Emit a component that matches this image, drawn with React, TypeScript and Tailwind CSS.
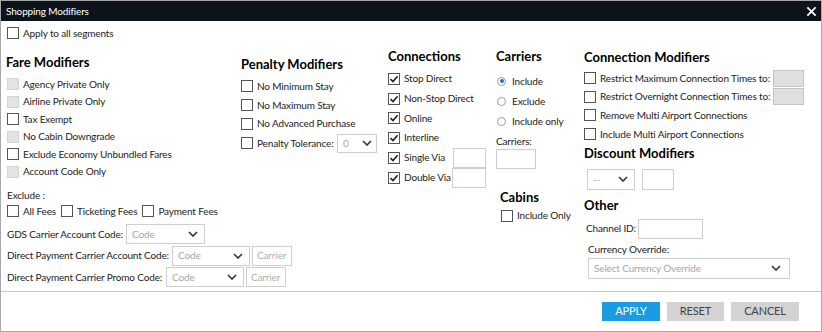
import React from "react";

const F = "font-['Lato','Liberation_Sans',sans-serif]";

function Box({ checked, disabled }: { checked?: boolean; disabled?: boolean }) {
  return (
    <span
      className={
        "relative inline-block w-[12px] h-[12px] shrink-0 border " +
        (disabled ? "border-[#d4d4d4] bg-[#e3e3e3]" : "border-[#555] bg-white")
      }
    >
      {checked && (
        <svg viewBox="0 0 12 12" className="absolute left-[-1px] top-[-1px] w-[12px] h-[12px]">
          <path d="M2.5 6.2 L5 8.6 L9.6 3.2" fill="none" stroke="#222" strokeWidth="1.6" />
        </svg>
      )}
    </span>
  );
}

function Check({
  label,
  checked,
  disabled,
  h = "h-[17.5px]",
}: {
  label: string;
  checked?: boolean;
  disabled?: boolean;
  h?: string;
}) {
  return (
    <div className={"flex items-center gap-[4px] whitespace-nowrap " + h}>
      <Box checked={checked} disabled={disabled} />
      <span>{label}</span>
    </div>
  );
}

function Radio({ label, on }: { label: string; on?: boolean }) {
  return (
    <div className="flex items-center gap-[6px] h-[20px] whitespace-nowrap">
      <span className="relative inline-block w-[9px] h-[9px] rounded-full border border-[#9a9a9a] bg-white">
        {on && <span className="absolute left-[1.5px] top-[1.5px] w-[4px] h-[4px] rounded-full bg-[#1f6fd0]" />}
      </span>
      <span>{label}</span>
    </div>
  );
}

function Chevron() {
  return (
    <svg viewBox="0 0 10 6" className="w-[10px] h-[6px] shrink-0">
      <path d="M1 1 L5 5 L9 1" fill="none" stroke="#333" strokeWidth="1.6" />
    </svg>
  );
}

function Select({ text, w, h = "h-[20px]", chevPad = "pr-[6px]" }: { text: string; w: string; h?: string; chevPad?: string }) {
  return (
    <div className={"flex items-center justify-between shrink-0 border border-[#cfcfcf] bg-white pl-[5px] text-[#a6a6a6] " + w + " " + h + " " + chevPad}>
      <span className="whitespace-nowrap">{text}</span>
      <Chevron />
    </div>
  );
}

function Input({ w, h = "h-[20px]", gray, ph }: { w: string; h?: string; gray?: boolean; ph?: string }) {
  return (
    <div
      className={
        "flex items-center shrink-0 border pl-[4px] text-[#b0b0b0] " +
        (gray ? "border-[#c4c4c4] bg-[#e0e0e0] " : "border-[#cfcfcf] bg-white ") +
        w +
        " " +
        h
      }
    >
      {ph}
    </div>
  );
}

function Heading({ children, cls = "" }: { children: React.ReactNode; cls?: string }) {
  return <div className={"h-[18px] flex items-center font-bold text-[13px] tracking-[0px] text-black whitespace-nowrap " + cls}>{children}</div>;
}

export default function App() {
  return (
    <div className={"w-[822px] h-[332px] bg-white text-[10px] tracking-[-0.15px] text-[#222] border border-[#a8a8a8] flex flex-col " + F}>
      <div className="h-[20px] shrink-0 bg-[#0c131b] flex items-center justify-between pl-[5px] pr-[4px] text-white">
        <span className="text-[10px]">Shopping Modifiers</span>
        <svg viewBox="0 0 12 12" className="w-[11px] h-[11px]">
          <path d="M1.5 1.5 L10.5 10.5 M10.5 1.5 L1.5 10.5" stroke="#fff" strokeWidth="2" />
        </svg>
      </div>

      <div className="flex h-[270px] shrink-0">
        {/* column 1 */}
        <div className="w-[240px] shrink-0 pl-[6px] flex flex-col">
          <div className="mt-[4px]">
            <Check label="Apply to all segments" h="h-[16px]" />
          </div>
          <Heading cls="mt-[13px] -ml-[1px]">Fare Modifiers</Heading>
          <div className="mt-[3.5px] flex flex-col">
            <Check label="Agency Private Only" disabled />
            <Check label="Airline Private Only" disabled />
            <Check label="Tax Exempt" />
            <Check label="No Cabin Downgrade" disabled />
            <Check label="Exclude Economy Unbundled Fares" />
            <Check label="Account Code Only" disabled />
          </div>
          <div className="mt-[6.5px] h-[16px] flex items-center">Exclude :</div>
          <div className="h-[16px] flex items-center gap-[5px]">
            <Check label="All Fees" h="h-[16px]" />
            <Check label="Ticketing Fees" h="h-[16px]" />
            <Check label="Payment Fees" h="h-[16px]" />
          </div>
          <div className="mt-[5px] h-[20px] flex items-center whitespace-nowrap">
            <span className="w-[119px] shrink-0">GDS Carrier Account Code:</span>
            <Select text="Code" w="w-[79px]" />
          </div>
          <div className="mt-[1.5px] h-[20px] flex items-center whitespace-nowrap">
            <span className="w-[165px] shrink-0">Direct Payment Carrier Account Code:</span>
            <Select text="Code" w="w-[78px]" />
            <div className="ml-[2px]">
              <Input w="w-[40px]" ph="Carrier" />
            </div>
          </div>
          <div className="mt-[1.5px] h-[20px] flex items-center whitespace-nowrap">
            <span className="w-[159px] shrink-0">Direct Payment Carrier Promo Code:</span>
            <Select text="Code" w="w-[78px]" />
            <div className="ml-[2px]">
              <Input w="w-[40px]" ph="Carrier" />
            </div>
          </div>
        </div>

        {/* column 2 */}
        <div className="w-[147px] shrink-0 flex flex-col pt-[35px]">
          <Heading>Penalty Modifiers</Heading>
          <div className="mt-[3px] flex flex-col">
            <Check label="No Minimum Stay" h="h-[18.7px]" />
            <Check label="No Maximum Stay" h="h-[18.7px]" />
            <Check label="No Advanced Purchase" h="h-[18.7px]" />
            <div className="h-[20px] flex items-center whitespace-nowrap">
              <div className="w-[96px] shrink-0">
                <Check label="Penalty Tolerance:" h="h-[20px]" />
              </div>
              <Select text="0" w="w-[40px]" h="h-[19px]" chevPad="pr-[4px]" />
            </div>
          </div>
        </div>

        {/* column 3 */}
        <div className="w-[108px] shrink-0 flex flex-col pt-[27px]">
          <Heading>Connections</Heading>
          <div className="mt-[3px] flex flex-col">
            <Check label="Stop Direct" checked h="h-[19.7px]" />
            <Check label="Non-Stop Direct" checked h="h-[19.7px]" />
            <Check label="Online" checked h="h-[19.7px]" />
            <Check label="Interline" checked h="h-[19.7px]" />
            <div className="h-[20px] flex items-center">
              <div className="w-[65px] shrink-0">
                <Check label="Single Via" checked h="h-[20px]" />
              </div>
              <Input w="w-[33px]" />
            </div>
            <div className="h-[20px] flex items-center">
              <div className="w-[64px] shrink-0">
                <Check label="Double Via" checked h="h-[20px]" />
              </div>
              <Input w="w-[34px]" />
            </div>
          </div>
        </div>

        {/* column 4 */}
        <div className="w-[88px] shrink-0 flex flex-col pt-[27px]">
          <Heading>Carriers</Heading>
          <div className="mt-[5px] pl-[1px] flex flex-col">
            <Radio label="Include" on />
            <Radio label="Exclude" />
            <Radio label="Include only" />
          </div>
          <div className="mt-[2px] h-[16px] flex items-center">Carriers:</div>
          <Input w="w-[40px]" />
          <div className="pl-[4px] mt-[20px] flex flex-col">
            <Heading>Cabins</Heading>
            <div className="pl-[1px]">
              <Check label="Include Only" h="h-[17.5px]" />
            </div>
          </div>
        </div>

        {/* column 5 */}
        <div className="flex-1 flex flex-col pt-[28px]">
          <Heading>Connection Modifiers</Heading>
          <div className="mt-[2px] flex flex-col">
            <div className="h-[18.6px] flex items-center">
              <div className="w-[189px] shrink-0">
                <Check label="Restrict Maximum Connection Times to:" h="h-[18.6px]" />
              </div>
              <Input w="w-[31px]" h="h-[17px]" gray />
            </div>
            <div className="h-[18.6px] flex items-center">
              <div className="w-[189px] shrink-0">
                <Check label="Restrict Overnight Connection Times to:" h="h-[18.6px]" />
              </div>
              <Input w="w-[31px]" h="h-[17px]" gray />
            </div>
            <Check label="Remove Multi Airport Connections" h="h-[18.6px]" />
            <Check label="Include Multi Airport Connections" h="h-[18.6px]" />
          </div>
          <Heading cls="mt-[1.5px]">Discount Modifiers</Heading>
          <div className="mt-[6px] flex items-center gap-[7px] pl-[3px]">
            <Select text="--" w="w-[48px]" h="h-[21px]" />
            <Input w="w-[32px]" h="h-[21px]" />
          </div>
          <Heading cls="mt-[7px]">Other</Heading>
          <div className="mt-[4px] h-[20px] flex items-center pl-[2px] whitespace-nowrap">
            <span className="w-[52px] shrink-0">Channel ID:</span>
            <Input w="w-[65px]" />
          </div>
          <div className="mt-[4px] h-[14px] flex items-center pl-[4px]">Currency Override:</div>
          <div className="pl-[4px] mt-[1px]">
            <Select text="Select Currency Override" w="w-[202px]" h="h-[21px]" chevPad="pr-[8px]" />
          </div>
        </div>
      </div>

      <div className="border-t border-[#c8c8c8] flex-1 flex justify-end items-start pt-[10px] pr-[22px] gap-[7px]">
        <button className="w-[58px] h-[19px] bg-[#1b9be2] text-white text-[11px] flex items-center justify-center">APPLY</button>
        <button className="w-[57px] h-[19px] bg-[#d3d3d3] text-[#444] text-[11px] flex items-center justify-center">RESET</button>
        <button className="w-[68px] h-[19px] bg-[#d3d3d3] text-[#444] text-[11px] flex items-center justify-center">CANCEL</button>
      </div>
    </div>
  );
}
